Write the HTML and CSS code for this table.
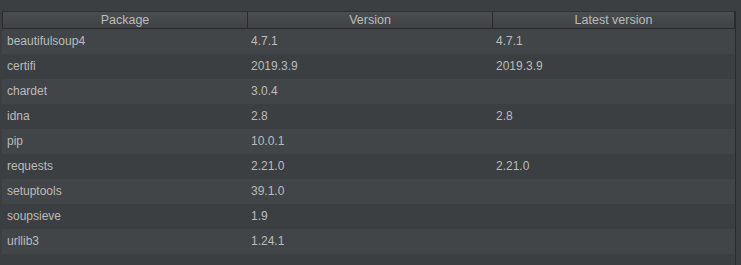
FILE: index.html
```html
<!DOCTYPE html>
<html lang="en">

<head>
  <meta charset="UTF-8">
  <title>Python Interpreter Packages</title>
  <link rel="stylesheet" href="styles.css">
</head>

<body>
  <div class="packages">
    <div class="table-head">
      <div class="head-cell">Package</div>
      <div class="head-cell">Version</div>
      <div class="head-cell">Latest version</div>
    </div>

    <div class="row">
      <div class="cell">beautifulsoup4</div>
      <div class="cell">4.7.1</div>
      <div class="cell">4.7.1</div>
    </div>
    <div class="row">
      <div class="cell">certifi</div>
      <div class="cell">2019.3.9</div>
      <div class="cell">2019.3.9</div>
    </div>
    <div class="row">
      <div class="cell">chardet</div>
      <div class="cell">3.0.4</div>
      <div class="cell"></div>
    </div>
    <div class="row">
      <div class="cell">idna</div>
      <div class="cell">2.8</div>
      <div class="cell">2.8</div>
    </div>
    <div class="row">
      <div class="cell">pip</div>
      <div class="cell">10.0.1</div>
      <div class="cell"></div>
    </div>
    <div class="row">
      <div class="cell">requests</div>
      <div class="cell">2.21.0</div>
      <div class="cell">2.21.0</div>
    </div>
    <div class="row">
      <div class="cell">setuptools</div>
      <div class="cell">39.1.0</div>
      <div class="cell"></div>
    </div>
    <div class="row">
      <div class="cell">soupsieve</div>
      <div class="cell">1.9</div>
      <div class="cell"></div>
    </div>
    <div class="row">
      <div class="cell">urllib3</div>
      <div class="cell">1.24.1</div>
      <div class="cell"></div>
    </div>
  </div>
</body>

</html>
```

FILE: styles.css
```css
html,
body {
  height: 100%;
}

body {
  margin: 0;
  padding: 11px 0 0 2px;
  box-sizing: border-box;
  background-color: #3c3f41;
  font-family: 'Liberation Sans', Arial, sans-serif;
  font-size: 12px;
  color: #bbbbbb;
}

.packages {
  width: 733px;
  height: 100%;
  border-right: 1px solid #2b2b2b;
}

.table-head,
.row {
  display: grid;
  grid-template-columns: 245px 245px 243px;
}

.table-head {
  height: 18px;
  box-sizing: border-box;
  background: linear-gradient(#4b4e50, #3f4244);
  border-top: 1px solid #2f3133;
  border-bottom: 1px solid #2b2b2b;
  font-size: 12.5px;
}

.head-cell {
  text-align: center;
  line-height: 16px;
  border-left: 1px solid #2b2b2b;
}

.head-cell:last-child {
  border-right: 1px solid #2b2b2b;
}

.row {
  height: 25px;
  line-height: 25px;
}

.row:nth-child(even) {
  background-color: #424547;
}

.cell {
  padding-left: 4px;
  white-space: nowrap;
}

.cell:first-child {
  padding-left: 5px;
}
```
